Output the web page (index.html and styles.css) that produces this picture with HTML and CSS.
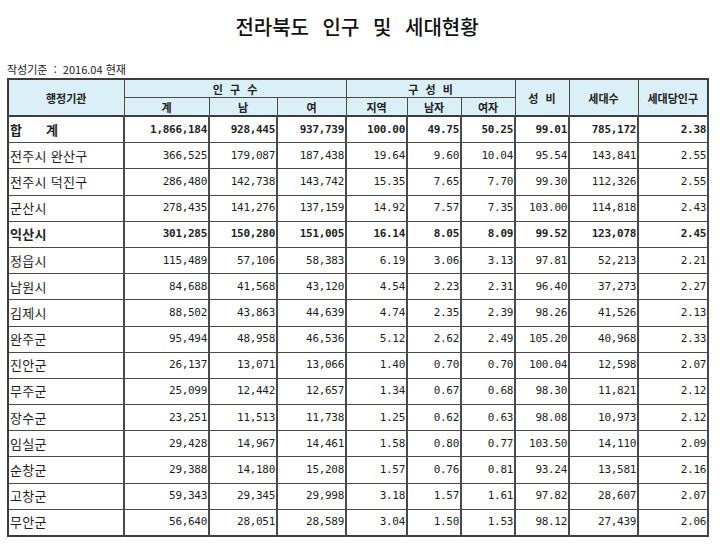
FILE: index.html
```html
<!DOCTYPE html>
<html lang="ko">
<head>
<meta charset="utf-8">
<title>전라북도 인구 및 세대현황</title>
<link rel="stylesheet" href="styles.css">
</head>
<body>
<div class="page">
  <h1 class="title">전라북도 인구 및 세대현황</h1>
  <div class="basis">작성기준&nbsp; : &nbsp;2016.04 현재</div>
  <table class="stats">
    <colgroup>
      <col class="c-name"><col class="c-total"><col class="c-m"><col class="c-f">
      <col class="c-r"><col class="c-r2"><col class="c-r2"><col class="c-r2">
      <col class="c-hh"><col class="c-pp">
    </colgroup>
    <thead>
      <tr class="h1">
        <th rowspan="2">행정기관</th>
        <th colspan="3" class="spaced">인 구 수</th>
        <th colspan="3" class="spaced">구 성 비</th>
        <th rowspan="2" class="spaced">성 비</th>
        <th rowspan="2">세대수</th>
        <th rowspan="2">세대당인구</th>
      </tr>
      <tr class="h2">
        <th>계</th><th>남</th><th>여</th><th>지역</th><th>남자</th><th>여자</th>
      </tr>
    </thead>
    <tbody>
      <tr class="bold"><td class="name">합&nbsp;&nbsp;&nbsp;&nbsp;&nbsp;&nbsp;계</td><td>1,866,184</td><td>928,445</td><td>937,739</td><td>100.00</td><td>49.75</td><td>50.25</td><td>99.01</td><td>785,172</td><td>2.38</td></tr>
      <tr><td class="name">전주시 완산구</td><td>366,525</td><td>179,087</td><td>187,438</td><td>19.64</td><td>9.60</td><td>10.04</td><td>95.54</td><td>143,841</td><td>2.55</td></tr>
      <tr><td class="name">전주시 덕진구</td><td>286,480</td><td>142,738</td><td>143,742</td><td>15.35</td><td>7.65</td><td>7.70</td><td>99.30</td><td>112,326</td><td>2.55</td></tr>
      <tr><td class="name">군산시</td><td>278,435</td><td>141,276</td><td>137,159</td><td>14.92</td><td>7.57</td><td>7.35</td><td>103.00</td><td>114,818</td><td>2.43</td></tr>
      <tr class="bold"><td class="name">익산시</td><td>301,285</td><td>150,280</td><td>151,005</td><td>16.14</td><td>8.05</td><td>8.09</td><td>99.52</td><td>123,078</td><td>2.45</td></tr>
      <tr><td class="name">정읍시</td><td>115,489</td><td>57,106</td><td>58,383</td><td>6.19</td><td>3.06</td><td>3.13</td><td>97.81</td><td>52,213</td><td>2.21</td></tr>
      <tr><td class="name">남원시</td><td>84,688</td><td>41,568</td><td>43,120</td><td>4.54</td><td>2.23</td><td>2.31</td><td>96.40</td><td>37,273</td><td>2.27</td></tr>
      <tr><td class="name">김제시</td><td>88,502</td><td>43,863</td><td>44,639</td><td>4.74</td><td>2.35</td><td>2.39</td><td>98.26</td><td>41,526</td><td>2.13</td></tr>
      <tr><td class="name">완주군</td><td>95,494</td><td>48,958</td><td>46,536</td><td>5.12</td><td>2.62</td><td>2.49</td><td>105.20</td><td>40,968</td><td>2.33</td></tr>
      <tr><td class="name">진안군</td><td>26,137</td><td>13,071</td><td>13,066</td><td>1.40</td><td>0.70</td><td>0.70</td><td>100.04</td><td>12,598</td><td>2.07</td></tr>
      <tr><td class="name">무주군</td><td>25,099</td><td>12,442</td><td>12,657</td><td>1.34</td><td>0.67</td><td>0.68</td><td>98.30</td><td>11,821</td><td>2.12</td></tr>
      <tr><td class="name">장수군</td><td>23,251</td><td>11,513</td><td>11,738</td><td>1.25</td><td>0.62</td><td>0.63</td><td>98.08</td><td>10,973</td><td>2.12</td></tr>
      <tr><td class="name">임실군</td><td>29,428</td><td>14,967</td><td>14,461</td><td>1.58</td><td>0.80</td><td>0.77</td><td>103.50</td><td>14,110</td><td>2.09</td></tr>
      <tr><td class="name">순창군</td><td>29,388</td><td>14,180</td><td>15,208</td><td>1.57</td><td>0.76</td><td>0.81</td><td>93.24</td><td>13,581</td><td>2.16</td></tr>
      <tr><td class="name">고창군</td><td>59,343</td><td>29,345</td><td>29,998</td><td>3.18</td><td>1.57</td><td>1.61</td><td>97.82</td><td>28,607</td><td>2.07</td></tr>
      <tr><td class="name">무안군</td><td>56,640</td><td>28,051</td><td>28,589</td><td>3.04</td><td>1.50</td><td>1.53</td><td>98.12</td><td>27,439</td><td>2.06</td></tr>
    </tbody>
  </table>
</div>
</body>
</html>
```

FILE: styles.css
```css
html, body {
  margin: 0;
  padding: 0;
  background: #ffffff;
}

.page {
  width: 720px;
  height: 548px;
  overflow: hidden;
  padding: 0 0 0 7px;
  box-sizing: border-box;
  color: #1a1a1a;
}

.title {
  margin: 0;
  padding-top: 14px;
  width: 700px;
  text-align: center;
  font-family: "Noto Sans CJK KR", "Noto Sans", sans-serif;
  font-weight: 500;
  font-size: 20px;
  line-height: 26px;
  letter-spacing: 0px;
  word-spacing: 8px;
  color: #111;
}

.basis {
  margin-top: 22px;
  height: 16px;
  font-family: "Noto Sans CJK KR", sans-serif;
  font-size: 11px;
  line-height: 14px;
  color: #222;
}

.stats {
  border-collapse: collapse;
  table-layout: fixed;
  width: 701px;
  border: 2px solid #3c3c3c;
  font-family: "DejaVu Sans Mono", "Noto Sans CJK KR", monospace;
  font-size: 11px;
  color: #1e1e1e;
}

.c-name { width: 116px; }
.c-total { width: 85px; }
.c-m { width: 68px; }
.c-f { width: 69px; }
.c-r { width: 61px; }
.c-r2 { width: 54px; }
.c-hh { width: 69px; }
.c-pp { width: 70px; }

.stats th {
  background: #daeff6;
  border: 1px solid #4a4a4a;
  font-family: "Noto Sans CJK KR", sans-serif;
  font-weight: 700;
  font-size: 11px;
  color: #222;
  padding: 0;
  height: 17px;
  line-height: 14px;
}

.stats th.spaced {
  word-spacing: 4px;
}

.stats thead {
  border-bottom: 2px solid #3c3c3c;
}

.stats td {
  border: 1px solid #4a4a4a;
  border-width: 1px 2px 1px 1px;
  height: 25.2px;
  padding: 0 1px 0 0;
  text-align: right;
  white-space: nowrap;
  letter-spacing: -0.3px;
  line-height: 14px;
}

.stats td.name {
  text-align: left;
  font-family: "Noto Sans CJK KR", sans-serif;
  font-size: 13px;
  letter-spacing: 0.3px;
  padding: 0 0 0 1px;
}

.stats tr.bold td {
  font-weight: 700;
}
```
